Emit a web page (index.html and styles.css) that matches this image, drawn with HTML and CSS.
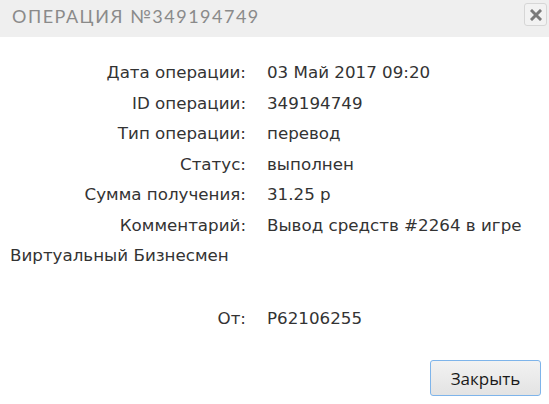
FILE: index.html
```html
<!DOCTYPE html>
<html lang="ru">
<head>
    <meta charset="UTF-8">
    <title>Операция №349194749</title>
    <link rel="stylesheet" href="styles.css">
</head>
<body>
    <div class="dialog">
        <div class="dialog-header">
            <span class="dialog-title">Операция №349194749</span>
            <button class="dialog-close" type="button" aria-label="Закрыть">
                <svg width="12" height="12" viewBox="0 0 12 12"><path d="M2 2L10 10M10 2L2 10" stroke="#7a7a7a" stroke-width="3" stroke-linecap="square"/></svg>
            </button>
        </div>
        <div class="dialog-body">
            <div class="row"><span class="label">Дата операции:</span><span class="value">03 Май 2017 09:20</span></div>
            <div class="row"><span class="label">ID операции:</span><span class="value">349194749</span></div>
            <div class="row"><span class="label">Тип операции:</span><span class="value">перевод</span></div>
            <div class="row"><span class="label">Статус:</span><span class="value">выполнен</span></div>
            <div class="row"><span class="label">Сумма получения:</span><span class="value">31.25 р</span></div>
            <div class="row"><span class="label">Комментарий:</span><span class="value">Вывод средств #2264 в игре Виртуальный Бизнесмен</span></div>
            <div class="row row-from"><span class="label">От:</span><span class="value">P62106255</span></div>
        </div>
        <div class="dialog-footer">
            <button class="btn" type="button">Закрыть</button>
        </div>
    </div>
</body>
</html>
```

FILE: styles.css
```css
body {
    margin: 0;
    background: #fff;
    font-family: "DejaVu Sans", sans-serif;
    color: #333;
}
.dialog {
    width: 549px;
    height: 404px;
    display: flex;
    flex-direction: column;
}
.dialog-header {
    height: 37px;
    background: #efefef;
    display: flex;
    align-items: center;
    justify-content: space-between;
    padding: 0 2px 0 12px;
    box-sizing: border-box;
}
.dialog-title {
    font-family: "Lato", sans-serif;
    font-size: 18px;
    letter-spacing: 1.5px;
    text-transform: uppercase;
    color: #8a8a8a;
    margin-top: -5px;
}
.dialog-close {
    width: 23px;
    height: 23px;
    margin-top: -8px;
    padding: 0;
    border: 1px solid #d6d6d6;
    border-radius: 3px;
    background: #f2f2f2;
    display: flex;
    align-items: center;
    justify-content: center;
    cursor: pointer;
}
.dialog-body {
    padding: 20px 10px 0;
    font-size: 16.7px;
    line-height: 30.5px;
}
.label {
    display: inline-block;
    width: 236px;
    margin-right: 21px;
    text-align: right;
}
.row-from {
    margin-top: 32px;
}
.dialog-footer {
    margin-top: auto;
    display: flex;
    justify-content: flex-end;
    padding: 0 8px 8px;
}
.btn {
    width: 111px;
    height: 36px;
    border: 1px solid #7eb4ea;
    border-radius: 3px;
    background: linear-gradient(#f2f2f2, #e3e3e3);
    font-family: "Open Sans", sans-serif;
    font-size: 17px;
    color: #1a1a1a;
}
```
